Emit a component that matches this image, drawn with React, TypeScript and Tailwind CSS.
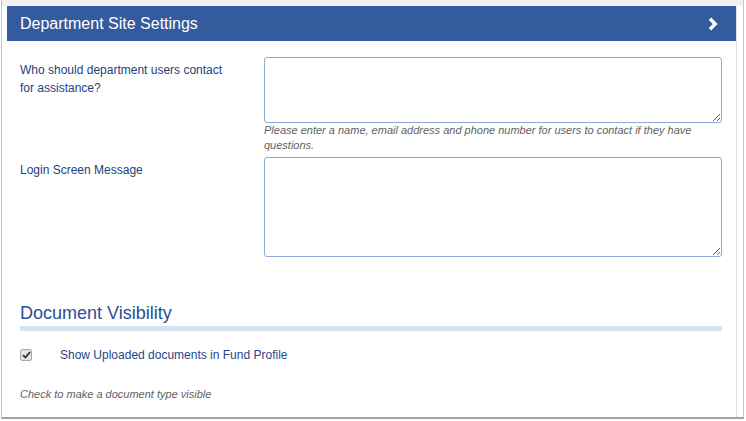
import React from "react";

function FieldRow({
  label,
  height,
  help,
}: {
  label: string;
  height: string;
  help?: string;
}) {
  return (
    <div className="flex">
      <div className="w-[244px] shrink-0 pt-[4px] pr-[28px] text-[12px] leading-[18px] text-[#233f7c]">
        {label}
      </div>
      <div className="flex-1">
        <textarea
          className={`block w-full ${height} resize-y rounded-[3px] border border-[#8eaadb] bg-white outline-none`}
        />
        {help ? (
          <p className="text-[11px] italic leading-[15px] text-[#5f5f5f]">{help}</p>
        ) : null}
      </div>
    </div>
  );
}

export default function App() {
  return (
    <div
      className="h-[421px] w-[746px] overflow-hidden bg-white"
      style={{ fontFamily: '"Liberation Sans", Arial, sans-serif' }}
    >
      <div className="ml-[1px] flex h-[419px] w-[743px] flex-col border-x border-b-2 border-x-[#c6c6c6] border-b-[#a3a3a3]">
        <div className="h-[6px] bg-[#f0f0f0]" />
        <div className="flex flex-1">
          <div className="flex w-[734px] flex-col">
            <div className="ml-[5px] flex h-[35px] w-[729px] items-center justify-between bg-[#345b9e] pl-[13px] pr-[18px]">
              <span className="text-[16px] text-white">Department Site Settings</span>
              <svg width="10" height="14" viewBox="0 0 10 14" aria-hidden>
                <path
                  d="M2 1.8 L7.2 7 L2 12.2"
                  fill="none"
                  stroke="white"
                  strokeWidth="3.4"
                  strokeLinejoin="miter"
                />
              </svg>
            </div>

            <div className="pl-[18px] pr-[14px] pt-[16px]">
              <FieldRow
                label="Who should department users contact for assistance?"
                height="h-[66px]"
                help="Please enter a name, email address and phone number for users to contact if they have questions."
              />
              <div className="mt-[4px]">
                <FieldRow label="Login Screen Message" height="h-[100px]" />
              </div>

              <h2 className="mt-[45px] text-[18px] leading-[22px] text-[#2a4f96]">
                Document Visibility
              </h2>
              <div className="mt-[2px] h-[5px] bg-[#d7e3f2]" />

              <div className="mt-[15px] flex h-[18px] items-center">
                <span className="flex h-[12px] w-[12px] items-center justify-center rounded-[2px] border border-[#a9a9a9] bg-[#e4e4e4]">
                  <svg width="9" height="8" viewBox="0 0 9 8" aria-hidden>
                    <path d="M1 4.2 L3.4 6.5 L8 1.2" fill="none" stroke="#333" strokeWidth="1.8" />
                  </svg>
                </span>
                <span className="ml-[28px] text-[12px] text-[#1f478b]">
                  Show Uploaded documents in Fund Profile
                </span>
              </div>

              <p className="mt-[23px] text-[11px] italic leading-[15px] text-[#5f5f5f]">
                Check to make a document type visible
              </p>
            </div>
          </div>
          <div className="w-px bg-[#e2e2e2]" />
          <div className="flex-1 bg-white" />
        </div>
      </div>
    </div>
  );
}
